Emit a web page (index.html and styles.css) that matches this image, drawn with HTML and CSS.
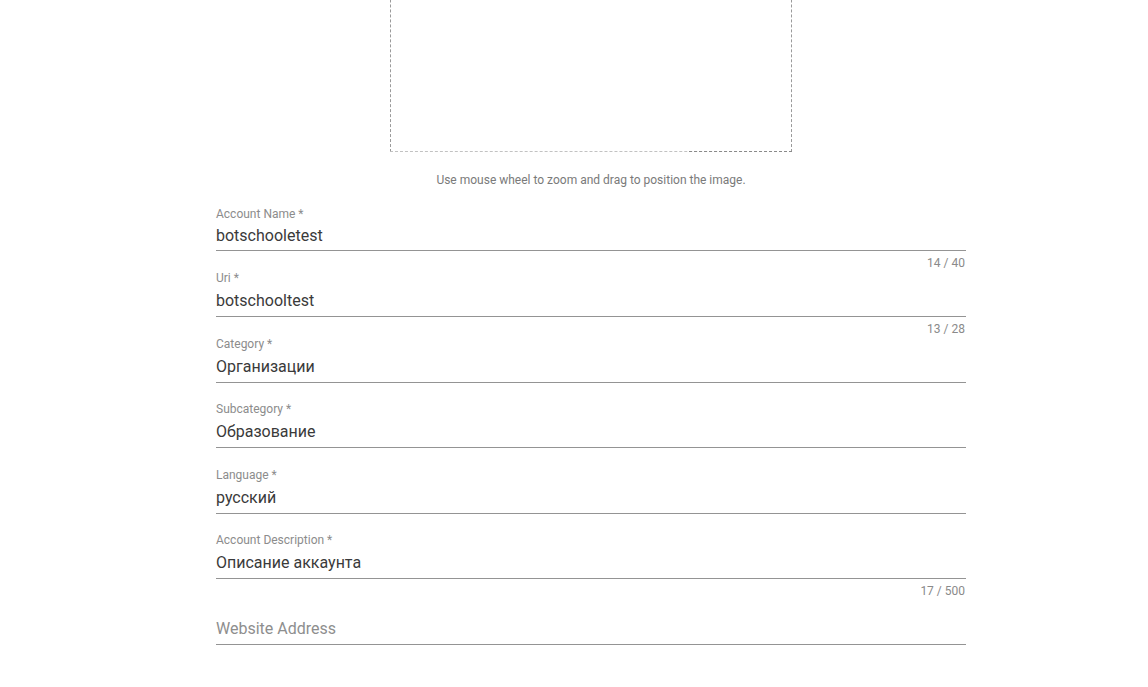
FILE: index.html
```html
<!DOCTYPE html>
<html lang="en">
  <head>
    <meta charset="UTF-8" />
    <meta name="viewport" content="width=device-width, initial-scale=1.0" />
    <title>Account Settings</title>
    <link rel="stylesheet" href="styles.css">
  </head>
  <body>
    <div class="page">
      <div class="cropper">
        <div class="crop-area"></div>
        <p class="crop-hint">Use mouse wheel to zoom and drag to position the image.</p>
      </div>

      <form class="account-form" id="accountForm">
        <div class="field">
          <label for="accountName">Account Name *</label>
          <input type="text" id="accountName" value="botschooletest" maxlength="40" />
          <div class="hint">14 / 40</div>
        </div>
        <div class="field">
          <label for="uri">Uri *</label>
          <input type="text" id="uri" value="botschooltest" maxlength="28" />
          <div class="hint">13 / 28</div>
        </div>
        <div class="field">
          <label for="category">Category *</label>
          <input type="text" id="category" value="Организации" />
        </div>
        <div class="field">
          <label for="subcategory">Subcategory *</label>
          <input type="text" id="subcategory" value="Образование" />
        </div>
        <div class="field">
          <label for="language">Language *</label>
          <input type="text" id="language" value="русский" />
        </div>
        <div class="field">
          <label for="description">Account Description *</label>
          <input type="text" id="description" value="Описание аккаунта" maxlength="500" />
          <div class="hint">17 / 500</div>
        </div>
        <div class="field">
          <label for="website" class="empty"></label>
          <input type="text" id="website" placeholder="Website Address" />
        </div>
      </form>
    </div>
  </body>
</html>
```

FILE: styles.css
```css
body {
  font-family: Roboto, "Noto Sans", Arial, sans-serif;
  margin: 0;
  background: #fff;
  overflow: hidden;
}

.page {
  width: 750px;
  margin: 0 auto;
  padding-left: 34px;
}

.cropper {
  display: flex;
  flex-direction: column;
  align-items: center;
}

.crop-area {
  position: relative;
  width: 400px;
  height: 300px;
  margin-top: -150px;
  border: 1px dashed #9a9a9a;
  border-bottom-color: #c2c2c2;
}

.crop-area::after {
  content: "";
  position: absolute;
  right: -1px;
  bottom: -1px;
  width: 103px;
  border-bottom: 1px dashed #8a8a8a;
}

.crop-hint {
  margin: 20px 0 0;
  font-size: 12px;
  line-height: 16px;
  color: #7a7a7a;
}

.account-form {
  display: flex;
  flex-direction: column;
  margin-top: 18px;
}

.field {
  display: flex;
  flex-direction: column;
  height: 65px;
}

.field:first-child {
  height: 64px;
}

.field:nth-child(even) {
  height: 66px;
}

.field label {
  font-size: 12px;
  line-height: 16px;
  height: 16px;
  color: #8c8c8c;
}

.field input {
  box-sizing: border-box;
  height: 31px;
  padding: 0 0 2px;
  border: none;
  border-bottom: 1px solid #949494;
  outline: none;
  font-family: inherit;
  font-size: 16px;
  line-height: 28px;
  color: #3a3a3a;
  background: transparent;
}

.field input::placeholder {
  color: #8e8e8e;
}

.hint {
  margin-top: 5px;
  padding-right: 1px;
  font-size: 12px;
  line-height: 14px;
  text-align: right;
  color: #8a8a8a;
}
```
